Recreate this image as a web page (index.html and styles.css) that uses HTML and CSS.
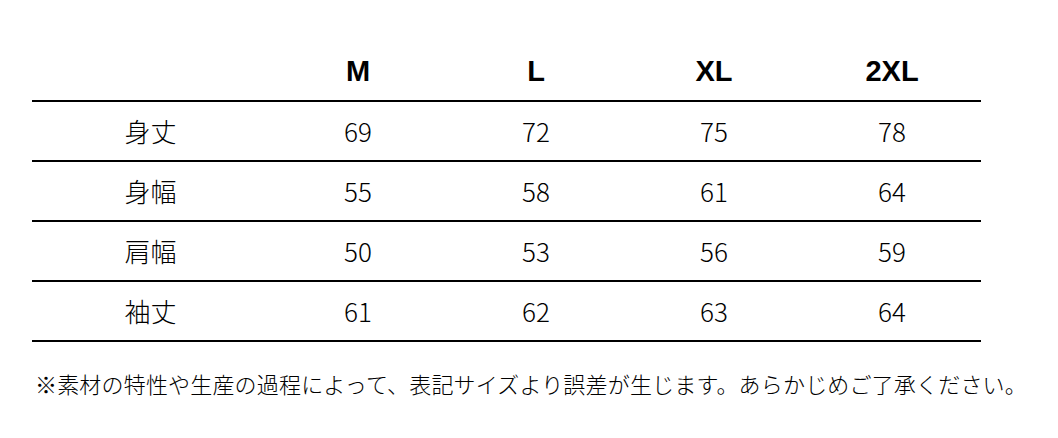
FILE: index.html
```html
<!DOCTYPE html>
<html lang="ja">
<head>
<meta charset="utf-8">
<link rel="stylesheet" href="styles.css">
</head>
<body>
<div class="sheet">
  <div class="size-table">
    <div class="row head">
      <div class="cell label"></div>
      <div class="cell">M</div>
      <div class="cell">L</div>
      <div class="cell">XL</div>
      <div class="cell">2XL</div>
    </div>
    <div class="row">
      <div class="cell label">身丈</div>
      <div class="cell">69</div>
      <div class="cell">72</div>
      <div class="cell">75</div>
      <div class="cell">78</div>
    </div>
    <div class="row">
      <div class="cell label">身幅</div>
      <div class="cell">55</div>
      <div class="cell">58</div>
      <div class="cell">61</div>
      <div class="cell">64</div>
    </div>
    <div class="row">
      <div class="cell label">肩幅</div>
      <div class="cell">50</div>
      <div class="cell">53</div>
      <div class="cell">56</div>
      <div class="cell">59</div>
    </div>
    <div class="row">
      <div class="cell label">袖丈</div>
      <div class="cell">61</div>
      <div class="cell">62</div>
      <div class="cell">63</div>
      <div class="cell">64</div>
    </div>
  </div>
  <p class="note">※素材の特性や生産の過程によって、表記サイズより誤差が生じます。あらかじめご了承ください。</p>
</div>
</body>
</html>
```

FILE: styles.css
```css
html, body {
  margin: 0;
  padding: 0;
  background: #fff;
}
.sheet {
  padding: 42px 0 0 32px;
  color: #000;
  font-family: "Noto Sans CJK JP", "Noto Sans", sans-serif;
}
.size-table {
  width: 949px;
  display: flex;
  flex-direction: column;
}
.row {
  display: grid;
  grid-template-columns: 237px repeat(4, 178px);
  height: 60px;
  box-sizing: border-box;
  border-bottom: 2px solid #000;
  align-items: center;
  font-size: 26px;
  font-weight: 300;
}
.cell {
  text-align: center;
  line-height: 1;
}
.row.head {
  font-family: "Liberation Sans", Arial, sans-serif;
  font-weight: bold;
  font-size: 29px;
}
.note {
  margin: 26px 0 0 3px;
  font-size: 22px;
  font-weight: 300;
  letter-spacing: 0.18px;
  line-height: 30px;
  white-space: nowrap;
}
```
